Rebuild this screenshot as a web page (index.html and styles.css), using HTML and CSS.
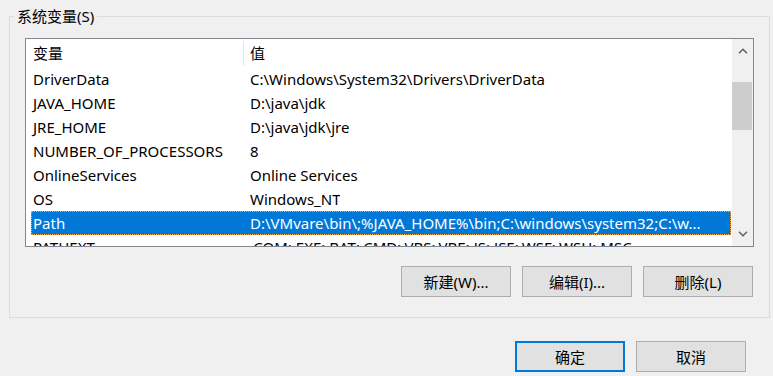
FILE: index.html
```html
<!DOCTYPE html>
<html lang="zh-CN">

<head>
  <meta charset="UTF-8">
  <meta name="viewport" content="width=device-width, initial-scale=1.0">
  <title>环境变量</title>

  <link rel="stylesheet" href="styles.css">
</head>

<body>
  <fieldset class="group">
    <legend>系统变量(S)</legend>

    <div class="listbox">
      <div class="list-body">
        <div class="list-header">
          <div class="col name">变量</div>
          <div class="col value">值</div>
        </div>
        <div class="row"><div class="col name">DriverData</div><div class="col value">C:\Windows\System32\Drivers\DriverData</div></div>
        <div class="row"><div class="col name">JAVA_HOME</div><div class="col value">D:\java\jdk</div></div>
        <div class="row"><div class="col name">JRE_HOME</div><div class="col value">D:\java\jdk\jre</div></div>
        <div class="row"><div class="col name">NUMBER_OF_PROCESSORS</div><div class="col value">8</div></div>
        <div class="row"><div class="col name">OnlineServices</div><div class="col value">Online Services</div></div>
        <div class="row"><div class="col name">OS</div><div class="col value">Windows_NT</div></div>
        <div class="row selected"><div class="col name">Path</div><div class="col value">D:\VMvare\bin\;%JAVA_HOME%\bin;C:\windows\system32;C:\w...</div></div>
        <div class="row"><div class="col name">PATHEXT</div><div class="col value">.COM;.EXE;.BAT;.CMD;.VBS;.VBE;.JS;.JSE;.WSF;.WSH;.MSC</div></div>
      </div>

      <div class="scrollbar">
        <div class="arrow">
          <svg width="10" height="6" viewBox="0 0 10 6"><polyline points="1,5.2 5,1.2 9,5.2" fill="none" stroke="#606060" stroke-width="1.5"/></svg>
        </div>
        <div class="track"><div class="thumb"></div></div>
        <div class="arrow">
          <svg width="10" height="6" viewBox="0 0 10 6"><polyline points="1,0.8 5,4.8 9,0.8" fill="none" stroke="#606060" stroke-width="1.5"/></svg>
        </div>
      </div>
    </div>

    <div class="actions">
      <button class="btn">新建(W)...</button>
      <button class="btn">编辑(I)...</button>
      <button class="btn">删除(L)</button>
    </div>
  </fieldset>

  <div class="dialog-actions">
    <button class="btn default">确定</button>
    <button class="btn">取消</button>
  </div>
</body>

</html>
```

FILE: styles.css
```css
body {
  margin: 0;
  background-color: #f0f0f0;
  color: #000000;
  font-family: "Microsoft YaHei UI", "Noto Sans", "Noto Sans CJK SC", sans-serif;
  font-size: 15px;
  width: 773px;
  height: 376px;
  overflow: hidden;
}

.group {
  margin: 6px 0 0 9px;
  width: 761px;
  box-sizing: border-box;
  border: 1px solid #dcdcdc;
  padding: 0 0 20px 0;
}

.group legend {
  margin-left: 4px;
  padding: 0 3px;
  height: 20px;
  line-height: 20px;
}

.listbox {
  display: flex;
  margin: 12px 0 0 15px;
  width: 729px;
  height: 209px;
  box-sizing: border-box;
  border: 1px solid #828790;
  background-color: #ffffff;
}

.list-body {
  flex: 1;
  overflow: hidden;
}

.list-header {
  display: flex;
  align-items: center;
  height: 28px;
}

.list-header .col {
  height: 25px;
  line-height: 25px;
}

.list-header .name {
  width: 210px;
  padding-left: 7px;
  border-right: 1px solid #e5e5e5;
}

.list-header .value {
  padding-left: 6px;
}

.row {
  display: flex;
  height: 24px;
  line-height: 24px;
  margin: 0 1px 0 5px;
  white-space: nowrap;
}

.row .name {
  width: 210px;
  padding-left: 2px;
  flex-shrink: 0;
}

.row .value {
  padding-left: 7px;
  overflow: hidden;
}

.row.selected {
  background-color: #0078d7;
  color: #ffffff;
  outline: 1px dotted #f7a64a;
  outline-offset: -1px;
}

.scrollbar {
  width: 21px;
  display: flex;
  flex-direction: column;
  background-color: #f0f0f0;
}

.arrow {
  height: 24px;
  display: flex;
  align-items: center;
  justify-content: center;
}

.track {
  flex: 1;
}

.thumb {
  margin: 19px 1px 0 0;
  height: 48px;
  background-color: #cdcdcd;
}

.actions {
  display: flex;
  justify-content: flex-end;
  gap: 11px;
  margin: 19px 16px 0 0;
}

.btn {
  width: 110px;
  height: 31px;
  border: 1px solid #adadad;
  background-color: #e1e1e1;
  font-family: inherit;
  font-size: 15px;
  color: #000000;
  padding: 0;
}

.btn.default {
  border: 2px solid #0078d7;
}

.dialog-actions {
  display: flex;
  justify-content: flex-end;
  gap: 11px;
  margin: 23px 27px 0 0;
}
```
